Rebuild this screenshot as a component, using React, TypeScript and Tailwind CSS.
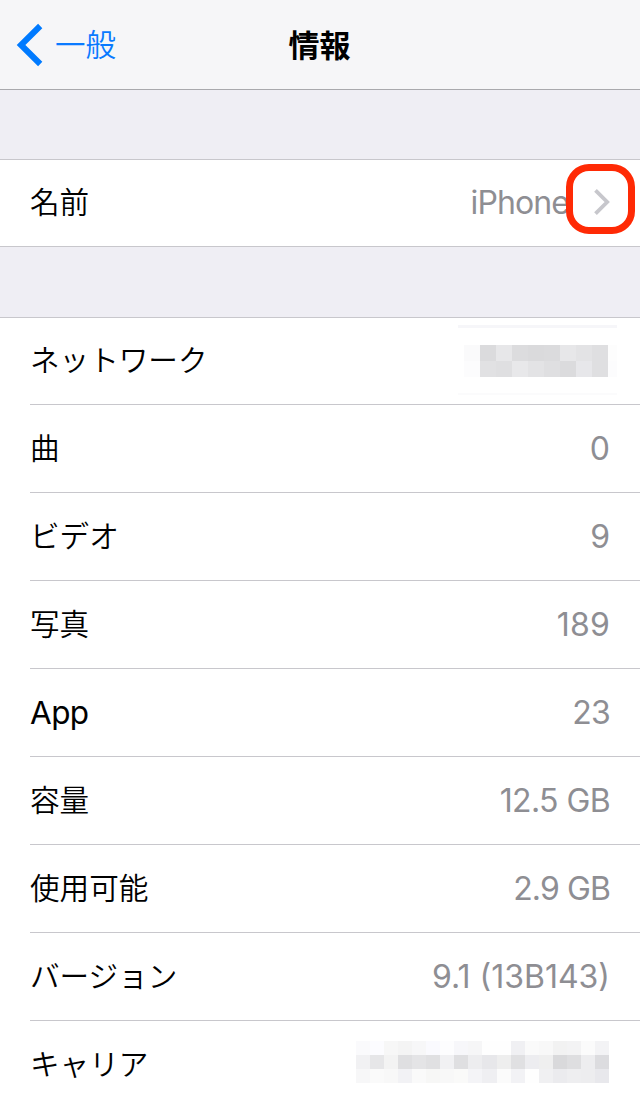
import React from "react";

const networkMosaic: string[][] = [
  ["#fafafb", "#dbdbdd", "#e7e7e9", "#dcdcde", "#dadadc", "#dbdbdd", "#e7e7e9", "#e3e3e5", "#dfdfe1", "#fdfdfd"],
  ["#fcfcfd", "#e1e1e3", "#dfdfe1", "#e8e8ea", "#e3e3e5", "#dfdfe1", "#dbdbdd", "#e7e7ea", "#dfdfe1", "#fcfcfd"],
];

const carrierMosaic: string[][] = [
  ["#fafafc", "#fcfcff", "#f7f7f7", "#f4f4f4", "#f7f7f8", "#fafafe", "#fdfdfe", "#f7f7fa", "#f6f6f7", "#fefefe", "#fefefe", "#f0f0f3", "#fafafa", "#f8f8f8", "#f2f2f2", "#f3f3f4", "#fbfbfb", "#f3f3f5"],
  ["#f1f1f3", "#e6e6e8", "#f3f3f3", "#dfdfe1", "#e4e4e6", "#e0e0e2", "#f1f1f3", "#dfdfe1", "#ededef", "#e7e7ea", "#eeeeee", "#e0e0e2", "#ededf0", "#efefef", "#d9d9db", "#dedee0", "#ededef", "#dcdcdf"],
  ["#f7f7f8", "#fafafa", "#f8f8f8", "#f2f2f5", "#fafafa", "#f7f7f6", "#f8f8f8", "#fafaf9", "#f4f4f7", "#efeff2", "#fbfbfb", "#f2f2f5", "#fefefe", "#f0f0f2", "#ebebee", "#eeeef0", "#ededef", "#e8e8ec"],
];

function NetworkValue() {
  return (
    <div className="mr-[23px] mb-[2px] flex h-[70px] w-[159px] flex-col border-t-[3px] border-b-2 border-t-[#f6f6f9] border-b-[#fbfbfc] pt-[17px] pl-[6px]">
      {networkMosaic.map((row, y) => (
        <div key={y} className="flex h-4">
          {row.map((color, x) => (
            <span key={x} className="h-4 w-4 last:w-[9px]" style={{ backgroundColor: color }} />
          ))}
        </div>
      ))}
    </div>
  );
}

function CarrierValue() {
  return (
    <div className="mr-[31px] mb-[6px] grid h-[42px] w-[253px] grid-cols-18">
      {carrierMosaic.flat().map((color, i) => (
        <span key={i} className="h-[14px]" style={{ backgroundColor: color }} />
      ))}
    </div>
  );
}

const label = "pb-[2px] text-[29.6px] leading-[44px] font-[350] text-black";
const latinLabel = "text-[31.5px] leading-[44px] font-normal tracking-[-0.6px] text-black";
const value = "pr-[30px] text-[32px] leading-[44px] font-normal text-[#8e8e93]";

const rows: { name: string; value: string; latin?: boolean; tracking: string }[] = [
  { name: "曲", value: "0", tracking: "tracking-normal" },
  { name: "ビデオ", value: "9", tracking: "tracking-normal" },
  { name: "写真", value: "189", tracking: "tracking-[0.2px]" },
  { name: "App", value: "23", latin: true, tracking: "tracking-[-0.8px]" },
  { name: "容量", value: "12.5 GB", tracking: "tracking-[-0.6px]" },
  { name: "使用可能", value: "2.9 GB", tracking: "tracking-[-0.9px]" },
  { name: "バージョン", value: "9.1 (13B143)", tracking: "tracking-normal" },
];

export default function App() {
  return (
    <div className="h-[1097px] w-[640px] overflow-hidden bg-[#efeef4] font-['Inter','Noto_Sans_CJK_JP',sans-serif]">
      <header className="grid h-[90px] grid-cols-3 items-center border-b border-[#a9a9ad] bg-[#f6f6f8]">
        <button className="flex items-center text-[#0a7aff]">
          <svg width="55" height="46" viewBox="0 0 55 46" fill="none">
            <path d="M40.2 4 21 23l19.2 19" stroke="#007aff" strokeWidth="6" />
          </svg>
          <span className="pt-px text-[30.5px] leading-[44px] font-[350]">一般</span>
        </button>
        <h1 className="pt-[3px] pr-px text-center text-[31px] leading-[44px] font-bold">情報</h1>
      </header>

      <section className="mt-[69px] flex h-[88px] items-center justify-between border-y border-[#c8c7cc] bg-white pl-[30px]">
        <span className={label}>名前</span>
        <span className="flex items-center">
          <span className="text-[32px] leading-[44px] font-normal tracking-[-0.9px] text-[#8e8e93]">iPhone</span>
          <span className="z-10 mr-[5px] mb-[8px] -ml-[3px] flex h-[70px] w-[69px] shrink-0 rounded-[23px] border-[7px] border-[#ff2a05] bg-white">
            <svg width="55" height="56" viewBox="0 0 55 56" fill="none">
              <path d="m22.5 19.3 11.7 11.7-11.7 11.7" stroke="#c7c7cc" strokeWidth="3.8" />
            </svg>
          </span>
        </span>
      </section>

      <section className="mt-[70px] border-t border-[#c8c7cc] bg-white pl-[30px]">
        <div className="flex h-[87px] items-center justify-between border-b border-[#c8c7cc]">
          <span className={label}>ネットワーク</span>
          <NetworkValue />
        </div>
        {rows.map((row) => (
          <div key={row.name} className="flex h-[88px] items-center justify-between border-b border-[#c8c7cc]">
            <span className={row.latin ? latinLabel : label}>{row.name}</span>
            <span className={`${value} ${row.tracking}`}>{row.value}</span>
          </div>
        ))}
        <div className="flex h-[88px] items-center justify-between">
          <span className={label}>キャリア</span>
          <CarrierValue />
        </div>
      </section>
    </div>
  );
}
